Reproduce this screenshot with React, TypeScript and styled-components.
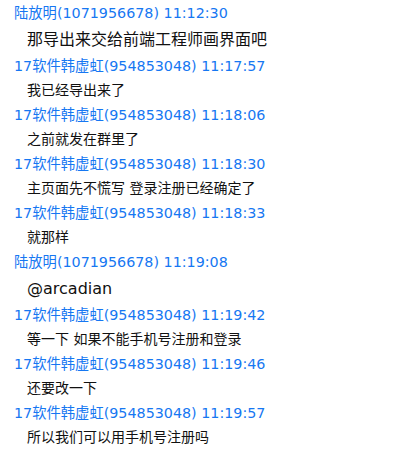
import React from 'react';
import styled, {createGlobalStyle} from "styled-components";

type ChatMessage = {
    sender: string
    time: string
    text: string
    big?: boolean
}

const messages: ChatMessage[] = [
    {sender: '陆放明(1071956678)', time: '11:12:30', text: '那导出来交给前端工程师画界面吧', big: true},
    {sender: '17软件韩虚虹(954853048)', time: '11:17:57', text: '我已经导出来了'},
    {sender: '17软件韩虚虹(954853048)', time: '11:18:06', text: '之前就发在群里了'},
    {sender: '17软件韩虚虹(954853048)', time: '11:18:30', text: '主页面先不慌写 登录注册已经确定了'},
    {sender: '17软件韩虚虹(954853048)', time: '11:18:33', text: '就那样'},
    {sender: '陆放明(1071956678)', time: '11:19:08', text: '@arcadian', big: true},
    {sender: '17软件韩虚虹(954853048)', time: '11:19:42', text: '等一下 如果不能手机号注册和登录'},
    {sender: '17软件韩虚虹(954853048)', time: '11:19:46', text: '还要改一下'},
    {sender: '17软件韩虚虹(954853048)', time: '11:19:57', text: '所以我们可以用手机号注册吗'},
]

const GlobalStyle = createGlobalStyle`
    html, body {
        margin: 0;
        padding: 0;
        background: #ffffff;
    }
`

export default function App() {
    return (
        <>
            <GlobalStyle/>
            <ChatLog>
                {messages.map((m, i) => (
                    <Entry key={i}>
                        <Header>{m.sender} {m.time}</Header>
                        <Body $big={m.big}>{m.text}</Body>
                    </Entry>
                ))}
            </ChatLog>
        </>
    );
}

const ChatLog = styled.div`
    width: 407px;
    height: 452px;
    padding-top: 2px;
    box-sizing: border-box;
    overflow: hidden;
    display: flex;
    flex-direction: column;
`
const Entry = styled.div`
    display: flex;
    flex-direction: column;
`
const Header = styled.div`
    padding-left: 14px;
    height: 22px;
    line-height: 22px;
    color: #1677f2;
    font-family: "DejaVu Sans", "Noto Sans CJK SC", sans-serif;
    font-size: 14.3px;
    white-space: nowrap;
`
const Body = styled.div<{ $big?: boolean }>`
    padding-left: 27px;
    height: ${p => p.$big ? 31 : 27}px;
    line-height: ${p => p.$big ? 31 : 27}px;
    color: #111111;
    font-family: "DejaVu Sans", "Noto Sans CJK SC", sans-serif;
    font-size: ${p => p.$big ? 16 : 14}px;
    white-space: nowrap;
`
